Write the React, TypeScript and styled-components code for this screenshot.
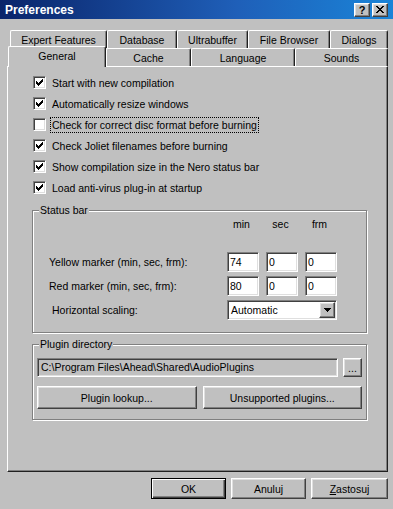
import { Fragment } from 'react';
import styled, { createGlobalStyle, css } from 'styled-components';

const GlobalStyle = createGlobalStyle`
  html, body {
    margin: 0;
    padding: 0;
    background: #c0c0c0;
  }
  body {
    font-family: "Liberation Sans", Arial, sans-serif;
    font-size: 10.5px;
    color: #000;
  }
`;

const raised = css`
  border: 1px solid;
  border-color: #fff #404040 #404040 #fff;
  box-shadow: inset -1px -1px 0 #808080, inset 1px 1px 0 #dfdfdf;
`;

const sunken = css`
  border: 1px solid;
  border-color: #808080 #fff #fff #808080;
  box-shadow: inset 1px 1px 0 #404040, inset -1px -1px 0 #dfdfdf;
`;

const backTabs = [
  { label: 'Expert Features', w: 97 },
  { label: 'Database', w: 70 },
  { label: 'Ultrabuffer', w: 71 },
  { label: 'File Browser', w: 82 },
  { label: 'Dialogs', w: 58 },
];

const frontTabs = [
  { label: 'General', w: 98, selected: true },
  { label: 'Cache', w: 85 },
  { label: 'Language', w: 104 },
  { label: 'Sounds', w: 93 },
];

const options = [
  { label: 'Start with new compilation', checked: true },
  { label: 'Automatically resize windows', checked: true },
  { label: 'Check for correct disc format before burning', checked: false, focused: true },
  { label: 'Check Joliet filenames before burning', checked: true },
  { label: 'Show compilation size in the Nero status bar', checked: true },
  { label: 'Load anti-virus plug-in at startup', checked: true },
];

const markers = [
  { label: 'Yellow marker (min, sec, frm):', values: ['74', '0', '0'] },
  { label: 'Red marker (min, sec, frm):', values: ['80', '0', '0'] },
];

function CheckMark() {
  // classic 7x7 win32 tick, one 3px column per x
  const cols = [2, 3, 4, 3, 2, 1, 0];
  return (
    <svg width="7" height="7" viewBox="0 0 7 7" shapeRendering="crispEdges">
      <path d={cols.map((y, x) => `M${x} ${y}h1v3h-1z`).join('')} fill="#000" />
    </svg>
  );
}

function App() {
  return (
    <>
      <GlobalStyle />
      <S.Window>
        <S.TitleBar>
          <span>Preferences</span>
          <S.TitleButtons>
            <S.TitleButton>?</S.TitleButton>
            <S.TitleButton>
              <svg width="8" height="7" viewBox="0 0 8 7" shapeRendering="crispEdges">
                <path
                  d="M0 0h2v1h1v1h2v-1h1v-1h2v1h-1v1h-1v1h-1v1h1v1h1v1h1v1h-2v-1h-1v-1h-2v1h-1v1h-2v-1h1v-1h1v-1h1v-1h-1v-1h-1v-1h-1z"
                  fill="#000"
                />
              </svg>
            </S.TitleButton>
          </S.TitleButtons>
        </S.TitleBar>

        <S.Content>
          <S.TabRow $offset={3}>
            {backTabs.map((t) => (
              <S.Tab key={t.label} $w={t.w}>
                {t.label}
              </S.Tab>
            ))}
          </S.TabRow>
          <S.TabRow $offset={1} $front>
            {frontTabs.map((t) => (
              <S.Tab key={t.label} $w={t.w} $selected={t.selected}>
                {t.label}
              </S.Tab>
            ))}
          </S.TabRow>

          <S.Panel>
            <S.CheckList>
              {options.map((o) => (
                <S.CheckRow key={o.label}>
                  <S.CheckBox>{o.checked && <CheckMark />}</S.CheckBox>
                  <S.CheckLabel $focused={o.focused}>{o.label}</S.CheckLabel>
                </S.CheckRow>
              ))}
            </S.CheckList>

            <S.Group $gap={12}>
              <S.Caption>Status bar</S.Caption>
              <S.StatusGrid>
                <span />
                <S.ColHead>min</S.ColHead>
                <S.ColHead>sec</S.ColHead>
                <S.ColHead>frm</S.ColHead>
                {markers.map((m) => (
                  <Fragment key={m.label}>
                    <S.RowLabel>{m.label}</S.RowLabel>
                    {m.values.map((v, i) => (
                      <S.Field key={i}>{v}</S.Field>
                    ))}
                  </Fragment>
                ))}
                <S.RowLabel $indent={3}>Horizontal scaling:</S.RowLabel>
                <S.Combo>
                  <span>Automatic</span>
                  <S.ComboArrow>
                    <svg width="7" height="4" viewBox="0 0 7 4" shapeRendering="crispEdges">
                      <path d="M0 0h7v1h-1v1h-1v1h-1v1h-1v-1h-1v-1h-1v-1h-1z" fill="#000" />
                    </svg>
                  </S.ComboArrow>
                </S.Combo>
              </S.StatusGrid>
            </S.Group>

            <S.Group $gap={11}>
              <S.Caption>Plugin directory</S.Caption>
              <S.PluginBody>
                <S.PathRow>
                  <S.PathField>C:\Program Files\Ahead\Shared\AudioPlugins</S.PathField>
                  <S.Button $h={19} $w={19}>...</S.Button>
                </S.PathRow>
                <S.ButtonPair>
                  <S.Button $h={23}>Plugin lookup...</S.Button>
                  <S.Button $h={23}>Unsupported plugins...</S.Button>
                </S.ButtonPair>
              </S.PluginBody>
            </S.Group>
          </S.Panel>

          <S.Footer>
            <S.Button $h={21} $w={75} $default>
              OK
            </S.Button>
            <S.Button $h={21} $w={75}>
              Anuluj
            </S.Button>
            <S.Button $h={21} $w={77}>
              <span>
                <u>Z</u>astosuj
              </span>
            </S.Button>
          </S.Footer>
        </S.Content>
      </S.Window>
    </>
  );
}

export default App;

const S = {
  Window: styled.div`
    width: 393px;
    height: 509px;
    background: #c0c0c0;
    display: flex;
    flex-direction: column;
    overflow: hidden;
  `,
  TitleBar: styled.div`
    flex: none;
    height: 19px;
    display: flex;
    align-items: center;
    justify-content: space-between;
    padding: 0 5px;
    background: linear-gradient(to right, #0a246a 0%, #1f5fb8 60%, #1a84d8 100%);
    color: #fff;
    font-weight: bold;
    font-size: 12px;
  `,
  TitleButtons: styled.div`
    display: flex;
    gap: 2px;
  `,
  TitleButton: styled.div`
    box-sizing: border-box;
    width: 16px;
    height: 14px;
    display: flex;
    align-items: center;
    justify-content: center;
    background: #c0c0c0;
    color: #000;
    font-size: 11px;
    font-weight: bold;
    ${raised}
  `,
  Content: styled.div`
    flex: 1;
    display: flex;
    flex-direction: column;
    padding: 11px 5px 0 7px;
  `,
  TabRow: styled.div<{ $offset: number; $front?: boolean }>`
    display: flex;
    height: 18px;
    padding-left: ${(p) => p.$offset}px;
    position: relative;
    z-index: ${(p) => (p.$front ? 2 : 0)};
  `,
  Tab: styled.div<{ $w: number; $selected?: boolean }>`
    box-sizing: border-box;
    flex: none;
    width: ${(p) => p.$w}px;
    height: ${(p) => (p.$selected ? 21 : 18)}px;
    margin-top: ${(p) => (p.$selected ? -2 : 0)}px;
    padding-bottom: ${(p) => (p.$selected ? 3 : 0)}px;
    display: flex;
    align-items: center;
    justify-content: center;
    background: #c0c0c0;
    border-left: 1px solid #fff;
    border-top: 1px solid #fff;
    border-right: 1px solid #202020;
    border-radius: 2px 2px 0 0;
    box-shadow: inset -1px 0 0 #808080;
    white-space: nowrap;
  `,
  Panel: styled.div`
    box-sizing: border-box;
    position: relative;
    z-index: 1;
    height: 406px;
    border: 1px solid;
    border-color: #fff #202020 #202020 #fff;
    box-shadow: inset -1px -1px 0 #808080;
    padding: 5px 20px 0 24px;
  `,
  CheckList: styled.div`
    display: flex;
    flex-direction: column;
    padding-left: 1px;
  `,
  CheckRow: styled.div`
    display: flex;
    align-items: center;
    height: 21px;
    gap: 5px;
  `,
  CheckBox: styled.div`
    box-sizing: border-box;
    width: 13px;
    height: 13px;
    display: flex;
    align-items: center;
    justify-content: center;
    background: #fff;
    ${sunken}
  `,
  CheckLabel: styled.span<{ $focused?: boolean }>`
    padding: 1px 1px;
    white-space: nowrap;
    outline: ${(p) => (p.$focused ? '1px dotted #000' : 'none')};
  `,
  Group: styled.div<{ $gap: number }>`
    position: relative;
    margin-top: ${(p) => p.$gap}px;
    border: 1px solid #808080;
    box-shadow: inset 1px 1px 0 #fff, 1px 1px 0 #fff;
  `,
  Caption: styled.span`
    position: absolute;
    top: -7px;
    left: 6px;
    padding: 0 1px;
    line-height: 12px;
    background: #c0c0c0;
  `,
  StatusGrid: styled.div`
    display: grid;
    grid-template-columns: 171px 32px 32px 32px;
    grid-template-rows: 32px 20px 20px 20px;
    column-gap: 7px;
    row-gap: 4px;
    padding: 5px 0 12px 16px;
  `,
  ColHead: styled.span`
    align-self: start;
    line-height: 16px;
    text-align: center;
    padding-right: 3px;
  `,
  RowLabel: styled.span<{ $indent?: number }>`
    align-self: center;
    padding-left: ${(p) => p.$indent ?? 0}px;
    white-space: nowrap;
  `,
  Field: styled.div`
    box-sizing: border-box;
    height: 20px;
    padding-left: 2px;
    line-height: 18px;
    background: #fff;
    ${sunken}
  `,
  Combo: styled.div`
    box-sizing: border-box;
    grid-column: 2 / span 3;
    height: 20px;
    display: flex;
    align-items: center;
    justify-content: space-between;
    padding: 0 1px 0 3px;
    background: #fff;
    ${sunken}
  `,
  ComboArrow: styled.div`
    box-sizing: border-box;
    width: 16px;
    height: 16px;
    display: flex;
    align-items: center;
    justify-content: center;
    background: #c0c0c0;
    ${raised}
  `,
  PluginBody: styled.div`
    display: flex;
    flex-direction: column;
    gap: 9px;
    padding: 13px 4px 10px 4px;
  `,
  PathRow: styled.div`
    display: flex;
    gap: 5px;
  `,
  PathField: styled.div`
    box-sizing: border-box;
    flex: 1;
    height: 19px;
    padding-left: 3px;
    line-height: 17px;
    background: #c0c0c0;
    white-space: nowrap;
    ${sunken}
  `,
  ButtonPair: styled.div`
    display: flex;
    gap: 6px;
  `,
  Button: styled.div<{ $h: number; $w?: number; $default?: boolean }>`
    box-sizing: border-box;
    flex: ${(p) => (p.$w ? 'none' : '1')};
    width: ${(p) => (p.$w ? `${p.$w}px` : 'auto')};
    height: ${(p) => p.$h}px;
    display: flex;
    align-items: center;
    justify-content: center;
    background: #c0c0c0;
    white-space: nowrap;
    ${(p) =>
      p.$default
        ? css`
            border: 1px solid #000;
            box-shadow: inset 1px 1px 0 #fff, inset -1px -1px 0 #404040, inset -2px -2px 0 #808080;
          `
        : raised}
  `,
  Footer: styled.div`
    display: flex;
    justify-content: flex-end;
    gap: 5px;
    margin-top: 6px;
  `,
};
